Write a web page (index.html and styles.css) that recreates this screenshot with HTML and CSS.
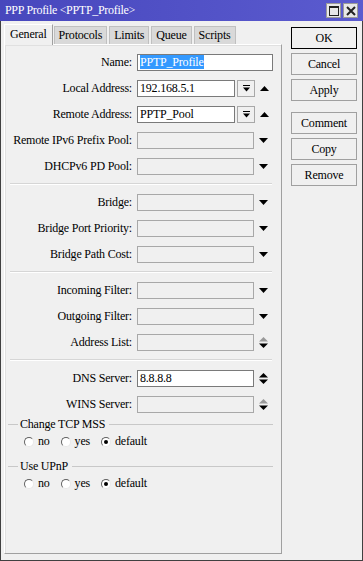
FILE: index.html
```html
<!DOCTYPE html>
<html lang="en">
<head>
    <meta charset="UTF-8">
    <title>PPP Profile</title>
    <link rel="stylesheet" href="styles.css">
</head>
<body>
    <div class="window">
        <div class="titlebar">
            <span class="title">PPP Profile &lt;PPTP_Profile&gt;</span>
            <div class="title-btns">
                <span class="tbtn"><svg width="10" height="10" viewBox="0 0 10 10"><rect x="0.5" y="0.5" width="9" height="9" fill="none" stroke="#222" stroke-width="1"/><rect x="0" y="0" width="10" height="2" fill="#222"/></svg></span>
                <span class="tbtn"><svg width="10" height="10" viewBox="0 0 10 10"><path d="M1 1 L9 9 M9 1 L1 9" stroke="#222" stroke-width="2"/></svg></span>
            </div>
        </div>

        <div class="content">
            <div class="left">
                <div class="tabs">
                    <span class="tab active">General</span>
                    <span class="tab">Protocols</span>
                    <span class="tab">Limits</span>
                    <span class="tab">Queue</span>
                    <span class="tab">Scripts</span>
                </div>

                <div class="panel">
                    <div class="row">
                        <label>Name:</label>
                        <span class="field wide"><span class="sel">PPTP_Profile</span></span>
                    </div>
                    <div class="row">
                        <label>Local Address:</label>
                        <span class="field short">192.168.5.1</span>
                        <span class="dropbtn"><svg width="9" height="9" viewBox="0 0 9 9"><rect x="1" y="1" width="7" height="1" fill="#000"/><path d="M1 3.5 H8 L4.5 7.5 Z" fill="#000"/></svg></span>
                        <span class="arrow"><svg width="11" height="11" viewBox="0 0 11 11"><path d="M1 8 H10 L5.5 3 Z" fill="#000"/></svg></span>
                    </div>
                    <div class="row">
                        <label>Remote Address:</label>
                        <span class="field short">PPTP_Pool</span>
                        <span class="dropbtn"><svg width="9" height="9" viewBox="0 0 9 9"><rect x="1" y="1" width="7" height="1" fill="#000"/><path d="M1 3.5 H8 L4.5 7.5 Z" fill="#000"/></svg></span>
                        <span class="arrow"><svg width="11" height="11" viewBox="0 0 11 11"><path d="M1 8 H10 L5.5 3 Z" fill="#000"/></svg></span>
                    </div>
                    <div class="row">
                        <label>Remote IPv6 Prefix Pool:</label>
                        <span class="field off"></span>
                        <span class="arrow"><svg width="11" height="11" viewBox="0 0 11 11"><path d="M1 3 H10 L5.5 8 Z" fill="#000"/></svg></span>
                    </div>
                    <div class="row">
                        <label>DHCPv6 PD Pool:</label>
                        <span class="field off"></span>
                        <span class="arrow"><svg width="11" height="11" viewBox="0 0 11 11"><path d="M1 3 H10 L5.5 8 Z" fill="#000"/></svg></span>
                    </div>

                    <div class="sep"></div>

                    <div class="row">
                        <label>Bridge:</label>
                        <span class="field off"></span>
                        <span class="arrow"><svg width="11" height="11" viewBox="0 0 11 11"><path d="M1 3 H10 L5.5 8 Z" fill="#000"/></svg></span>
                    </div>
                    <div class="row">
                        <label>Bridge Port Priority:</label>
                        <span class="field off"></span>
                        <span class="arrow"><svg width="11" height="11" viewBox="0 0 11 11"><path d="M1 3 H10 L5.5 8 Z" fill="#000"/></svg></span>
                    </div>
                    <div class="row">
                        <label>Bridge Path Cost:</label>
                        <span class="field off"></span>
                        <span class="arrow"><svg width="11" height="11" viewBox="0 0 11 11"><path d="M1 3 H10 L5.5 8 Z" fill="#000"/></svg></span>
                    </div>

                    <div class="sep"></div>

                    <div class="row">
                        <label>Incoming Filter:</label>
                        <span class="field off"></span>
                        <span class="arrow"><svg width="11" height="11" viewBox="0 0 11 11"><path d="M1 3 H10 L5.5 8 Z" fill="#000"/></svg></span>
                    </div>
                    <div class="row">
                        <label>Outgoing Filter:</label>
                        <span class="field off"></span>
                        <span class="arrow"><svg width="11" height="11" viewBox="0 0 11 11"><path d="M1 3 H10 L5.5 8 Z" fill="#000"/></svg></span>
                    </div>
                    <div class="row">
                        <label>Address List:</label>
                        <span class="field off"></span>
                        <span class="arrow"><svg width="11" height="13" viewBox="0 0 11 13"><path d="M1 5.5 H10 L5.5 1 Z" fill="#999"/><path d="M1 7.5 H10 L5.5 12 Z" fill="#000"/></svg></span>
                    </div>

                    <div class="sep"></div>

                    <div class="row">
                        <label>DNS Server:</label>
                        <span class="field">8.8.8.8</span>
                        <span class="arrow"><svg width="11" height="13" viewBox="0 0 11 13"><path d="M1 5.5 H10 L5.5 1 Z" fill="#000"/><path d="M1 7.5 H10 L5.5 12 Z" fill="#000"/></svg></span>
                    </div>
                    <div class="row">
                        <label>WINS Server:</label>
                        <span class="field off"></span>
                        <span class="arrow"><svg width="11" height="13" viewBox="0 0 11 13"><path d="M1 5.5 H10 L5.5 1 Z" fill="#999"/><path d="M1 7.5 H10 L5.5 12 Z" fill="#000"/></svg></span>
                    </div>

                    <div class="group">
                        <div class="group-title"><span>Change TCP MSS</span></div>
                        <div class="radios">
                            <span class="radio"><i class="dot"></i>no</span>
                            <span class="radio"><i class="dot"></i>yes</span>
                            <span class="radio"><i class="dot on"></i>default</span>
                        </div>
                    </div>
                    <div class="group">
                        <div class="group-title"><span>Use UPnP</span></div>
                        <div class="radios">
                            <span class="radio"><i class="dot"></i>no</span>
                            <span class="radio"><i class="dot"></i>yes</span>
                            <span class="radio"><i class="dot on"></i>default</span>
                        </div>
                    </div>
                </div>
            </div>

            <div class="actions">
                <button class="btn default">OK</button>
                <button class="btn">Cancel</button>
                <button class="btn">Apply</button>
                <button class="btn spaced">Comment</button>
                <button class="btn">Copy</button>
                <button class="btn">Remove</button>
            </div>
        </div>
    </div>
</body>
</html>
```

FILE: styles.css
```css
body {
    margin: 0;
    font-family: 'Liberation Serif', serif;
    font-size: 12px;
    letter-spacing: -0.2px;
    color: #000;
    background: #f0f0f0;
}

.window {
    width: 363px;
    height: 561px;
    box-sizing: border-box;
    border: 1px solid #404040;
    border-top: none;
    background: #f0f0f0;
    display: flex;
    flex-direction: column;
}

.titlebar {
    height: 21px;
    margin: 0 -1px;
    background: linear-gradient(to right, #4747bd, #5b5bcf);
    color: #fff;
    display: flex;
    align-items: center;
    justify-content: space-between;
    padding: 0 5px 0 5px;
}

.title {
    font-size: 12px;
    letter-spacing: -0.3px;
}

.title-btns {
    display: flex;
    gap: 2px;
}

.tbtn {
    width: 13px;
    height: 13px;
    background: #e8e8e8;
    border: 1px solid #9a9a9a;
    display: flex;
    align-items: center;
    justify-content: center;
}

.content {
    display: flex;
    flex: 1;
    padding: 3px 0 0 3px;
}

.left {
    width: 278px;
    display: flex;
    flex-direction: column;
}

.tabs {
    display: flex;
    align-items: flex-end;
    height: 20px;
    position: relative;
    z-index: 1;
}

.tab {
    height: 17px;
    line-height: 17px;
    padding: 0 4px;
    margin-right: 2px;
    background: #d9d9d9;
    border: 1px solid #c0c0c0;
    border-bottom: none;
}

.tab.active {
    height: 20px;
    line-height: 18px;
    padding: 0 5px;
    background: #f0f0f0;
    border-color: #fff #a0a0a0 #f0f0f0 #fff;
    margin-bottom: -1px;
    margin-right: 1px;
}

.panel {
    height: 510px;
    box-sizing: border-box;
    border: 1px solid;
    border-color: #fff #a0a0a0 #a0a0a0 #fff;
    box-shadow: inset 1px 1px 0 #e0e0e0;
    padding-top: 4px;
}

.row {
    display: flex;
    align-items: center;
    height: 26px;
}

.row label {
    width: 127px;
    margin-right: 5px;
    text-align: right;
}

.field {
    width: 117px;
    height: 17px;
    box-sizing: border-box;
    border: 1px solid #7a7a7a;
    background: #fff;
    line-height: 15px;
    padding-left: 2px;
    white-space: nowrap;
    overflow: hidden;
}

.field.wide {
    width: 136px;
}

.field.short {
    width: 98px;
}

.field.off {
    background: #f0f0f0;
    border-color: #a8a8a8;
}

.sel {
    background: #3399ff;
    color: #fff;
}

.dropbtn {
    width: 18px;
    height: 17px;
    box-sizing: border-box;
    margin-left: 2px;
    border: 1px solid #a8a8a8;
    background: #f0f0f0;
    display: flex;
    align-items: center;
    justify-content: center;
}

.arrow {
    width: 11px;
    margin-left: 4px;
    display: flex;
    align-items: center;
}

.sep {
    height: 0;
    margin: 4px 9px 4px 5px;
    border-top: 1px solid #d6d6d6;
    border-bottom: 1px solid #fff;
}

.group {
    margin: 0 8px 0 3px;
}

.group-title {
    display: flex;
    align-items: center;
    height: 14px;
}

.group-title::before {
    content: '';
    width: 10px;
    border-top: 1px solid #c8c8c8;
    margin-right: 2px;
}

.group-title::after {
    content: '';
    flex: 1;
    border-top: 1px solid #c8c8c8;
    margin-left: 4px;
}

.radios {
    display: flex;
    align-items: center;
    height: 17px;
    padding-left: 16px;
    margin: 2px 0 9px;
}

.radio {
    display: flex;
    align-items: center;
    margin-right: 11px;
}

.dot {
    width: 10px;
    height: 10px;
    box-sizing: border-box;
    border-radius: 50%;
    border: 1px solid;
    border-color: #606060 #e8e8e8 #e8e8e8 #606060;
    background: #fff;
    margin-right: 4px;
    position: relative;
}

.dot.on::after {
    content: '';
    position: absolute;
    left: 2px;
    top: 2px;
    width: 4px;
    height: 4px;
    border-radius: 50%;
    background: #000;
}

.actions {
    display: flex;
    flex-direction: column;
    margin-left: 9px;
    padding-top: 3px;
    gap: 4px;
}

.btn {
    width: 66px;
    height: 22px;
    font-family: 'Liberation Serif', serif;
    font-size: 12px;
    letter-spacing: -0.2px;
    background: #f0f0f0;
    border: 1px solid #a0a0a0;
    padding: 0;
    color: #000;
}

.btn.default {
    border-color: #000;
}

.btn.spaced {
    margin-top: 7px;
}
```
